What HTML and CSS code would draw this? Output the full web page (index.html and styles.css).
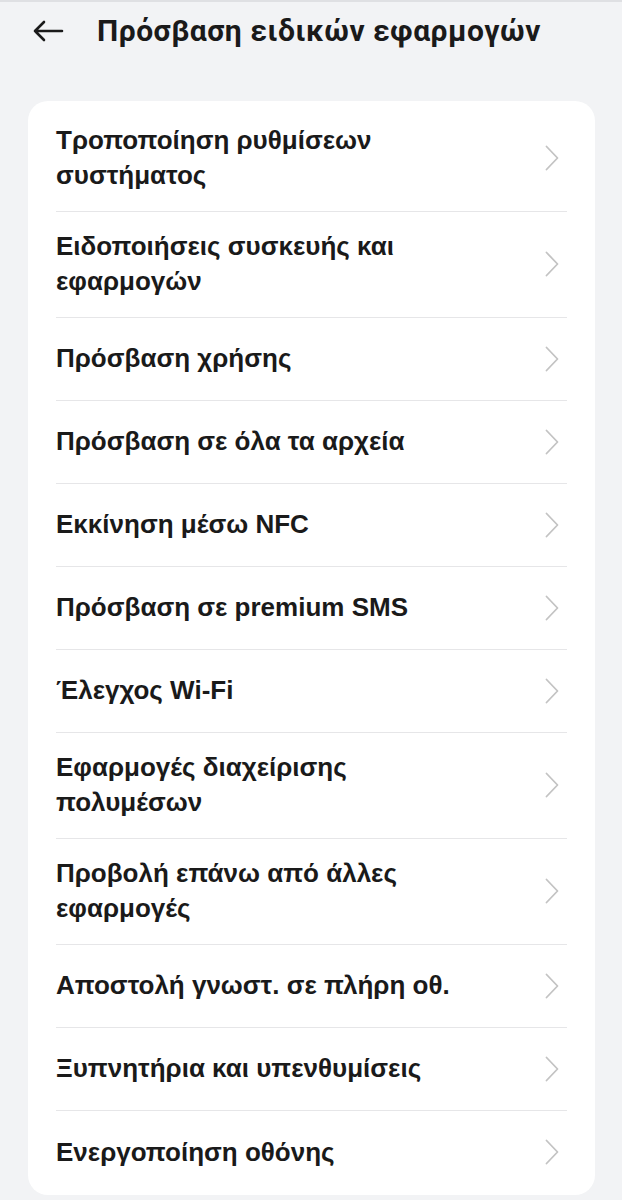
FILE: index.html
```html
<!DOCTYPE html>
<html lang="el">
<head>
<meta charset="utf-8">
<link rel="stylesheet" href="styles.css">
</head>
<body>
<div class="page">
  <header class="topbar">
    <svg class="back" width="32" height="22" viewBox="0 0 32 22"><path d="M30 11H3M12 2L3 11l9 9" fill="none" stroke="#1a1a1a" stroke-width="2.6" stroke-linecap="round" stroke-linejoin="round"/></svg>
    <h1 class="title">Πρόσβαση ειδικών εφαρμογών</h1>
  </header>
  <div class="card">
    <div class="row"><span class="label">Τροποποίηση ρυθμίσεων συστήματος</span><svg class="chev" width="14" height="26" viewBox="0 0 14 26"><path d="M1.5 1.5L12.5 13L1.5 24.5" fill="none" stroke="#c3c3c3" stroke-width="1.8" stroke-linecap="round" stroke-linejoin="round"/></svg></div>
    <div class="row"><span class="label">Ειδοποιήσεις συσκευής και εφαρμογών</span><svg class="chev" width="14" height="26" viewBox="0 0 14 26"><path d="M1.5 1.5L12.5 13L1.5 24.5" fill="none" stroke="#c3c3c3" stroke-width="1.8" stroke-linecap="round" stroke-linejoin="round"/></svg></div>
    <div class="row"><span class="label">Πρόσβαση χρήσης</span><svg class="chev" width="14" height="26" viewBox="0 0 14 26"><path d="M1.5 1.5L12.5 13L1.5 24.5" fill="none" stroke="#c3c3c3" stroke-width="1.8" stroke-linecap="round" stroke-linejoin="round"/></svg></div>
    <div class="row"><span class="label">Πρόσβαση σε όλα τα αρχεία</span><svg class="chev" width="14" height="26" viewBox="0 0 14 26"><path d="M1.5 1.5L12.5 13L1.5 24.5" fill="none" stroke="#c3c3c3" stroke-width="1.8" stroke-linecap="round" stroke-linejoin="round"/></svg></div>
    <div class="row"><span class="label">Εκκίνηση μέσω NFC</span><svg class="chev" width="14" height="26" viewBox="0 0 14 26"><path d="M1.5 1.5L12.5 13L1.5 24.5" fill="none" stroke="#c3c3c3" stroke-width="1.8" stroke-linecap="round" stroke-linejoin="round"/></svg></div>
    <div class="row"><span class="label">Πρόσβαση σε premium SMS</span><svg class="chev" width="14" height="26" viewBox="0 0 14 26"><path d="M1.5 1.5L12.5 13L1.5 24.5" fill="none" stroke="#c3c3c3" stroke-width="1.8" stroke-linecap="round" stroke-linejoin="round"/></svg></div>
    <div class="row"><span class="label">Έλεγχος Wi-Fi</span><svg class="chev" width="14" height="26" viewBox="0 0 14 26"><path d="M1.5 1.5L12.5 13L1.5 24.5" fill="none" stroke="#c3c3c3" stroke-width="1.8" stroke-linecap="round" stroke-linejoin="round"/></svg></div>
    <div class="row"><span class="label">Εφαρμογές διαχείρισης πολυμέσων</span><svg class="chev" width="14" height="26" viewBox="0 0 14 26"><path d="M1.5 1.5L12.5 13L1.5 24.5" fill="none" stroke="#c3c3c3" stroke-width="1.8" stroke-linecap="round" stroke-linejoin="round"/></svg></div>
    <div class="row"><span class="label">Προβολή επάνω από άλλες εφαρμογές</span><svg class="chev" width="14" height="26" viewBox="0 0 14 26"><path d="M1.5 1.5L12.5 13L1.5 24.5" fill="none" stroke="#c3c3c3" stroke-width="1.8" stroke-linecap="round" stroke-linejoin="round"/></svg></div>
    <div class="row"><span class="label">Αποστολή γνωστ. σε πλήρη οθ.</span><svg class="chev" width="14" height="26" viewBox="0 0 14 26"><path d="M1.5 1.5L12.5 13L1.5 24.5" fill="none" stroke="#c3c3c3" stroke-width="1.8" stroke-linecap="round" stroke-linejoin="round"/></svg></div>
    <div class="row"><span class="label">Ξυπνητήρια και υπενθυμίσεις</span><svg class="chev" width="14" height="26" viewBox="0 0 14 26"><path d="M1.5 1.5L12.5 13L1.5 24.5" fill="none" stroke="#c3c3c3" stroke-width="1.8" stroke-linecap="round" stroke-linejoin="round"/></svg></div>
    <div class="row"><span class="label">Ενεργοποίηση οθόνης</span><svg class="chev" width="14" height="26" viewBox="0 0 14 26"><path d="M1.5 1.5L12.5 13L1.5 24.5" fill="none" stroke="#c3c3c3" stroke-width="1.8" stroke-linecap="round" stroke-linejoin="round"/></svg></div>
  </div>
</div>
</body>
</html>
```
FILE: styles.css
```css
html, body {
  margin: 0;
  padding: 0;
  background: #f2f3f5;
}
body {
  font-family: "Liberation Sans", Arial, sans-serif;
  color: #1a1a1a;
  border-top: 2px solid #dfe0e3;
}
.page {
  padding: 0 27px 0 28px;
}
.topbar {
  display: flex;
  align-items: center;
  height: 58px;
  padding-left: 4px;
}
.back {
  flex: none;
  margin-right: 33px;
}
.title {
  margin: 0;
  font-family: Roboto, sans-serif;
  font-size: 30px;
  font-weight: 700;
  line-height: 36px;
  letter-spacing: 0.5px;
}
.card {
  margin-top: 41px;
  background: #ffffff;
  border-radius: 20px;
  padding: 5px 28px 1px;
}
.row {
  display: flex;
  align-items: center;
  min-height: 83px;
  box-sizing: border-box;
  padding: 17px 0 18px;
  border-bottom: 1px solid #e6e6e8;
}
.row:last-child {
  border-bottom: none;
}
.label {
  flex: 1;
  font-size: 26px;
  font-weight: 700;
  line-height: 35px;
  padding-right: 60px;
}
.chev {
  flex: none;
  margin-right: 8px;
}
```
